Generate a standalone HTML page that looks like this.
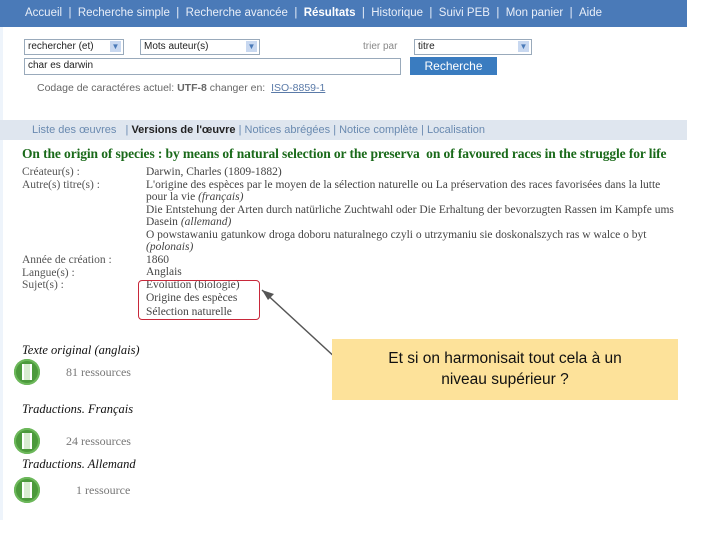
<!DOCTYPE html><html><head><style>
body{margin:0;width:720px;height:540px;background:#fff;position:relative;overflow:hidden;font-family:"Liberation Sans",sans-serif}
.a{position:absolute;white-space:nowrap}
.nav{left:0;top:0;width:687px;height:27px;background:#4a7ab8;color:#e8eef8;font-size:11.5px;line-height:27px}
.sel{border:1px solid #9ab;background:#fff;height:14px;font-size:10px;line-height:14px;padding-left:3px;color:#222}
.arr{position:absolute;right:2px;top:1px;width:11px;height:11px;background:#c8d8f0;color:#4a7ab8;font-size:8px;line-height:11px;text-align:center}
.serif{font-family:"Liberation Serif",serif}
.lab{color:#555;font-size:11.5px}
.val{color:#444;font-size:11.5px;line-height:12.5px}
.ic{width:26px;height:26px;border-radius:50%;background:#4c9a3c;box-shadow:inset 0 0 0 2px #6cb85a}
.ic:after{content:"";position:absolute;left:8px;top:5px;width:10px;height:16px;background:#d8ecd0;border-left:2px solid #fff;border-right:2px solid #fff;box-sizing:border-box}
</style></head><body>
<div class="a" style="left:0;top:27px;width:687px;height:113px;background:#fff;border-left:3px solid #eef4fb;box-sizing:border-box"></div>
<div class="a nav"><span style="margin-left:25px">Accueil &nbsp;| &nbsp;Recherche simple &nbsp;| &nbsp;Recherche avancée &nbsp;| &nbsp;<b style="color:#fff">Résultats</b> &nbsp;| &nbsp;Historique &nbsp;| &nbsp;Suivi PEB &nbsp;| &nbsp;Mon panier &nbsp;| &nbsp;Aide</span></div>
<div class="a sel" style="left:24px;top:39px;width:95px">rechercher (et)<span class="arr">▼</span></div>
<div class="a sel" style="left:140px;top:39px;width:115px">Mots auteur(s)<span class="arr">▼</span></div>
<div class="a" style="left:363px;top:41px;font-size:10px;color:#888">trier par</div>
<div class="a sel" style="left:414px;top:39px;width:113px">titre<span class="arr">▼</span></div>
<div class="a sel" style="left:24px;top:58px;width:372px;height:15px">char es darwin</div>
<div class="a" style="left:410px;top:57px;width:87px;height:18px;background:#3a7cc0;color:#fff;font-size:12px;line-height:18px;text-align:center">Recherche</div>
<div class="a" style="left:37px;top:82px;font-size:10.5px;color:#666">Codage de caractéres actuel: <b>UTF-8</b> changer en: &nbsp;<u style="color:#5a7aa8">ISO-8859-1</u></div>
<div class="a" style="left:0;top:120px;width:687px;height:20px;background:#dfe6ef;font-size:11px;line-height:20px;color:#6a8ab0"><span style="margin-left:32px">Liste des œuvres &nbsp; | <b style="color:#222">Versions de l'œuvre</b> | Notices abrégées | Notice complète | Localisation</span></div>
<div class="a" style="left:0;top:140px;width:3px;height:380px;background:#eef4fb"></div>
<div class="a serif" style="left:22px;top:146px;font-size:13.5px;font-weight:bold;color:#1a6a1a;letter-spacing:-0.1px">On the origin of species : by means of natural selection or the preserva&nbsp; on of favoured races in the struggle for life</div>
<div class="a serif lab" style="left:22px;top:166px;line-height:12.5px">Créateur(s) :<br>Autre(s) titre(s) :</div>
<div class="a serif lab" style="left:22px;top:254px;line-height:12.5px">Année de création :<br>Langue(s) :<br>Sujet(s) :</div>
<div class="a serif val" style="left:146px;top:166px">Darwin, Charles (1809-1882)<br>L'origine des espèces par le moyen de la sélection naturelle ou La préservation des races favorisées dans la lutte<br>pour la vie <i>(français)</i><br>Die Entstehung der Arten durch natürliche Zuchtwahl oder Die Erhaltung der bevorzugten Rassen im Kampfe ums<br>Dasein <i>(allemand)</i><br>O powstawaniu gatunkow droga doboru naturalnego czyli o utrzymaniu sie doskonalszych ras w walce o byt<br><i>(polonais)</i><br>1860<br>Anglais<br>Evolution (biologie)<br><span style="line-height:14px">Origine des espèces<br>Sélection naturelle</span></div>
<div class="a" style="left:138px;top:280px;width:120px;height:38px;border:1.5px solid #c8283a;border-radius:4px"></div>
<svg class="a" style="left:0;top:0" width="720" height="540"><line x1="262" y1="290" x2="338" y2="360" stroke="#555" stroke-width="1.5"/><polygon points="262,290 274,294 268,300" fill="#555"/></svg>
<div class="a" style="left:332px;top:339px;width:346px;height:61px;background:#fde29a;font-size:15.5px;text-align:center;line-height:21px;padding-top:9px;box-sizing:border-box;color:#111">Et si on harmonisait tout cela à un<br>niveau supérieur ?</div>
<div class="a serif" style="left:22px;top:343px;font-size:12.5px;font-style:italic;color:#111">Texte original (anglais)</div>
<div class="a ic" style="left:14px;top:359px"></div>
<div class="a serif" style="left:66px;top:365px;font-size:12px;color:#777">81 ressources</div>
<div class="a serif" style="left:22px;top:402px;font-size:12.5px;font-style:italic;color:#111">Traductions. Français</div>
<div class="a ic" style="left:14px;top:428px"></div>
<div class="a serif" style="left:66px;top:434px;font-size:12px;color:#777">24 ressources</div>
<div class="a serif" style="left:22px;top:457px;font-size:12.5px;font-style:italic;color:#111">Traductions. Allemand</div>
<div class="a ic" style="left:14px;top:477px"></div>
<div class="a serif" style="left:76px;top:483px;font-size:12px;color:#777">1 ressource</div>
</body></html>
